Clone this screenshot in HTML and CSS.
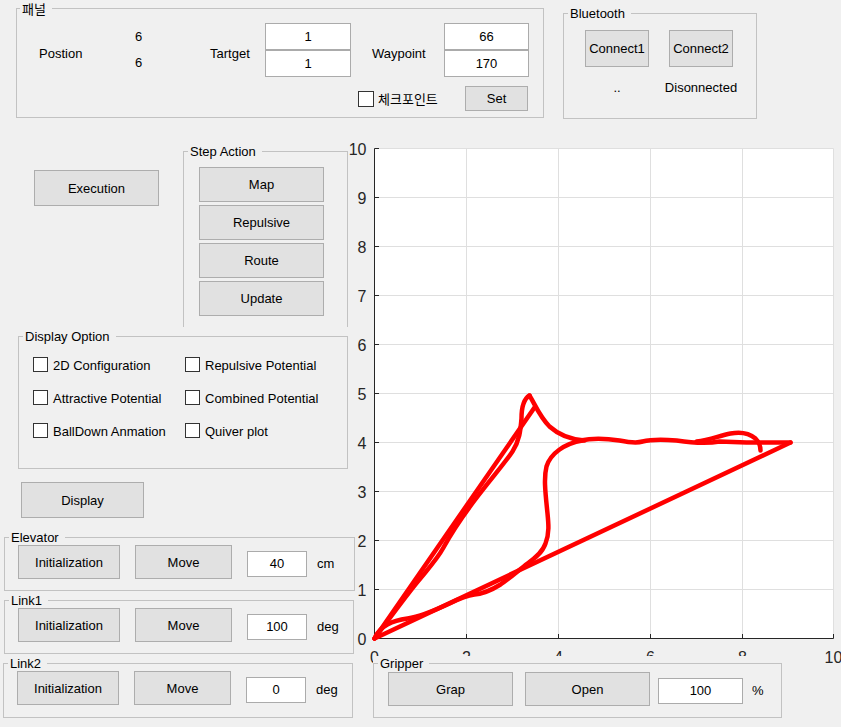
FILE: index.html
```html
<!DOCTYPE html>
<html lang="ko">
<head>
<meta charset="utf-8">
<title>Robot GUI</title>
<link rel="stylesheet" href="styles.css">
</head>
<body>
<div class="app">
  <div class="top">
    <div class="panel p-main">
      <span class="legend">패널</span>
      <div class="main-grid">
        <span class="lbl l-pos">Postion</span>
        <div class="vals"><span>6</span><span>6</span></div>
        <span class="lbl l-tar">Tartget</span>
        <div class="fields"><div class="field f-tar">1</div><div class="field f-tar">1</div></div>
        <span class="lbl l-way">Waypoint</span>
        <div class="fields"><div class="field f-way">66</div><div class="field f-way">170</div></div>
        <label class="chk chk-kr"><span class="box"></span><span>체크포인트</span></label>
        <button class="btn b-set">Set</button>
      </div>
    </div>
    <div class="panel p-bt">
      <span class="legend">Bluetooth</span>
      <div class="bt-grid">
        <button class="btn b-conn">Connect1</button>
        <button class="btn b-conn">Connect2</button>
        <span class="bt-status">..</span>
        <span class="bt-status">Disonnected</span>
      </div>
    </div>
  </div>

  <div class="main">
    <div class="left">
      <div class="row-exec">
        <button class="btn b-exec">Execution</button>
        <div class="panel p-step">
          <span class="legend">Step Action</span>
          <div class="step-list">
            <button class="btn b-step">Map</button>
            <button class="btn b-step">Repulsive</button>
            <button class="btn b-step">Route</button>
            <button class="btn b-step">Update</button>
          </div>
        </div>
      </div>

      <div class="panel p-disp">
        <span class="legend">Display Option</span>
        <div class="opt-grid">
          <label class="chk"><span class="box"></span><span>2D Configuration</span></label>
          <label class="chk"><span class="box"></span><span>Repulsive Potential</span></label>
          <label class="chk"><span class="box"></span><span>Attractive Potential</span></label>
          <label class="chk"><span class="box"></span><span>Combined Potential</span></label>
          <label class="chk"><span class="box"></span><span>BallDown Anmation</span></label>
          <label class="chk"><span class="box"></span><span>Quiver plot</span></label>
        </div>
      </div>

      <button class="btn b-display">Display</button>

      <div class="panel p-joint p-elev">
        <span class="legend">Elevator</span>
        <div class="joint-row">
          <button class="btn b-init">Initialization</button>
          <button class="btn b-move">Move</button>
          <div class="field f-joint">40</div>
          <span class="unit">cm</span>
        </div>
      </div>
      <div class="panel p-joint p-link1">
        <span class="legend">Link1</span>
        <div class="joint-row">
          <button class="btn b-init">Initialization</button>
          <button class="btn b-move">Move</button>
          <div class="field f-joint">100</div>
          <span class="unit">deg</span>
        </div>
      </div>
      <div class="panel p-joint p-link2">
        <span class="legend">Link2</span>
        <div class="joint-row">
          <button class="btn b-init">Initialization</button>
          <button class="btn b-move">Move</button>
          <div class="field f-joint">0</div>
          <span class="unit">deg</span>
        </div>
      </div>
    </div>

    <div class="right">
      <svg class="chart" width="496" height="532" viewBox="0 0 496 532" xmlns="http://www.w3.org/2000/svg">
        <g transform="translate(29.5,8.5)">
          <rect x="0" y="0" width="459" height="490" fill="#ffffff"/>
          <g stroke="#dfdfdf" stroke-width="1">
            <line x1="92" y1="0" x2="92" y2="490"/>
            <line x1="184" y1="0" x2="184" y2="490"/>
            <line x1="276" y1="0" x2="276" y2="490"/>
            <line x1="368" y1="0" x2="368" y2="490"/>
            <line x1="459" y1="0" x2="459" y2="490"/>
            <line x1="0" y1="0" x2="459" y2="0"/>
            <line x1="0" y1="49" x2="459" y2="49"/>
            <line x1="0" y1="98" x2="459" y2="98"/>
            <line x1="0" y1="147" x2="459" y2="147"/>
            <line x1="0" y1="196" x2="459" y2="196"/>
            <line x1="0" y1="245" x2="459" y2="245"/>
            <line x1="0" y1="294" x2="459" y2="294"/>
            <line x1="0" y1="343" x2="459" y2="343"/>
            <line x1="0" y1="392" x2="459" y2="392"/>
            <line x1="0" y1="441" x2="459" y2="441"/>
          </g>
          <g stroke="#262626" stroke-width="1">
            <line x1="0" y1="0" x2="0" y2="490"/>
            <line x1="0" y1="490" x2="459" y2="490"/>
            <line x1="0" y1="0" x2="4.5" y2="0"/>
            <line x1="0" y1="49" x2="4.5" y2="49"/>
            <line x1="0" y1="98" x2="4.5" y2="98"/>
            <line x1="0" y1="147" x2="4.5" y2="147"/>
            <line x1="0" y1="196" x2="4.5" y2="196"/>
            <line x1="0" y1="245" x2="4.5" y2="245"/>
            <line x1="0" y1="294" x2="4.5" y2="294"/>
            <line x1="0" y1="343" x2="4.5" y2="343"/>
            <line x1="0" y1="392" x2="4.5" y2="392"/>
            <line x1="0" y1="441" x2="4.5" y2="441"/>
            <line x1="92" y1="490" x2="92" y2="485.5"/>
            <line x1="184" y1="490" x2="184" y2="485.5"/>
            <line x1="276" y1="490" x2="276" y2="485.5"/>
            <line x1="368" y1="490" x2="368" y2="485.5"/>
            <line x1="459" y1="490" x2="459" y2="485.5"/>
          </g>
          <g class="tick" text-anchor="end">
            <text x="-8" y="6.5">10</text>
            <text x="-8" y="55.5">9</text>
            <text x="-8" y="104.5">8</text>
            <text x="-8" y="153.5">7</text>
            <text x="-8" y="202.5">6</text>
            <text x="-8" y="251.5">5</text>
            <text x="-8" y="300.5">4</text>
            <text x="-8" y="349.5">3</text>
            <text x="-8" y="398.5">2</text>
            <text x="-8" y="447.5">1</text>
            <text x="-8" y="496.5">0</text>
          </g>
          <g class="tick" text-anchor="middle">
            <text x="0" y="514">0</text>
            <text x="92" y="514">2</text>
            <text x="184" y="514">4</text>
            <text x="276" y="514">6</text>
            <text x="368" y="514">8</text>
            <text x="459" y="514">10</text>
          </g>
          <g fill="none" stroke="#ff0000" stroke-width="4.5" stroke-linecap="round" stroke-linejoin="round">
            <path d="M0,490 L416,294"/>
            <path d="M0,490 L160,259"/>
            <path d="M1,488 C6,478 18,472 33,470 C46,468 60,462 75,455 C85,450 92,447 100,446 C110,445 118,441 126,436 C135,430 145,421 153,415 C160,410 168,404 171,395 C175,385 174,375 173,365 C171,345 169,330 172,318 C176,305 190,295 208,292"/>
            <path d="M206,292 C220,289 232,290 245,292 C255,294 262,295 268,293 C276,291 290,291 302,292 C315,294 330,296 345,293 L372,294 L416,294"/>
            <path d="M322,293 C335,292 345,287 356,285 C366,283 375,285 381,290 C385,294 386,298 386,302"/>
            <path d="M0,490 C12,474 25,456 40,437 C52,422 62,412 69,399 C75,388 85,372 100,352 C115,332 130,315 138,303 C145,292 146,282 147,270 C147,258 150,250 155,247"/>
            <path d="M155,247 C160,255 165,268 175,278 C185,287 195,291 210,292"/>
          </g>
        </g>
      </svg>
      <div class="grip-wrap">
        <div class="panel p-grip">
          <span class="legend">Gripper</span>
          <div class="grip-row">
            <button class="btn b-grip">Grap</button>
            <button class="btn b-grip b-open">Open</button>
            <div class="field f-grip">100</div>
            <span class="unit">%</span>
          </div>
        </div>
      </div>
    </div>
  </div>
</div>
</body>
</html>
```

FILE: styles.css
```css
* { box-sizing: border-box; }

html, body {
  margin: 0;
  padding: 0;
  background: #f0f0f0;
}

body {
  font-family: "Liberation Sans", Arial, "Noto Sans CJK KR", sans-serif;
  font-size: 13px;
  line-height: 15px;
  color: #000;
}

.app {
  width: 841px;
  height: 727px;
  overflow: hidden;
  background: #f0f0f0;
}

/* generic controls */
.panel {
  position: relative;
  border: 1px solid #c2c2c2;
}

.legend {
  position: absolute;
  top: -8px;
  left: 4px;
  padding: 0 6px 0 2px;
  background: #f0f0f0;
  line-height: 15px;
  white-space: nowrap;
}

.btn {
  display: flex;
  align-items: center;
  justify-content: center;
  margin: 0;
  padding: 0;
  font: inherit;
  color: #000;
  background: #e1e1e1;
  border: 1px solid #adadad;
  border-radius: 0;
}

.field {
  display: flex;
  align-items: center;
  justify-content: center;
  background: #fff;
  border: 1px solid #ababab;
}

.chk {
  display: flex;
  align-items: center;
  gap: 5px;
  white-space: nowrap;
}

.box {
  width: 15px;
  height: 15px;
  background: #fff;
  border: 1px solid #333;
  flex: none;
}

/* top row */
.top {
  display: flex;
  align-items: flex-start;
  height: 119px;
}

.p-main {
  margin: 8px 0 0 16px;
  width: 528px;
  height: 110px;
}

.p-main .legend {
  font-family: "Noto Sans CJK KR", sans-serif;
  font-size: 13px;
  top: -9px;
  left: 3px;
  line-height: 17px;
}

.main-grid {
  display: grid;
  grid-template-columns: 111px 21px 116px 86px 93px 85px;
  grid-template-rows: 54px 25px;
  row-gap: 9px;
  padding-top: 14px;
}

.lbl {
  align-self: start;
  margin-top: 23px;
  white-space: nowrap;
}

.l-pos { padding-left: 22px; }
.l-tar { padding-left: 61px; }
.l-way { padding-left: 21px; }

.vals {
  display: flex;
  flex-direction: column;
  align-items: center;
  padding-top: 1px;
  line-height: 26px;
}

.fields {
  display: flex;
  flex-direction: column;
}

.f-tar, .f-way { height: 27px; }

.chk-kr {
  grid-column: 5;
  grid-row: 2;
  padding-left: 7px;
  gap: 4px;
  font-family: "Noto Sans CJK KR", sans-serif;
  font-size: 13px;
}

.chk-kr .box { width: 16px; height: 16px; }

.b-set {
  grid-column: 6;
  grid-row: 2;
  margin-left: 21px;
  width: 63px;
  height: 25px;
}

.p-bt {
  margin: 13px 0 0 19px;
  width: 194px;
  height: 106px;
}

.bt-grid {
  display: grid;
  grid-template-columns: 64px 64px;
  grid-template-rows: 37px 15px;
  column-gap: 20px;
  row-gap: 13px;
  padding: 16px 0 0 21px;
}

.b-conn { height: 37px; }

.bt-status {
  display: flex;
  justify-content: center;
  white-space: nowrap;
}

/* main area */
.main {
  display: flex;
  align-items: flex-start;
}

.left {
  width: 355px;
  flex: none;
  display: flex;
  flex-direction: column;
  align-items: flex-start;
}

.row-exec {
  display: flex;
  align-items: flex-start;
}

.b-exec {
  margin: 51px 0 0 34px;
  width: 125px;
  height: 36px;
}

.p-step {
  margin: 32px 0 0 24px;
  width: 165px;
  height: 176px;
  border-bottom: none;
}

.step-list {
  display: flex;
  flex-direction: column;
  gap: 3px;
  padding: 15px 0 0 15px;
}

.b-step {
  width: 125px;
  height: 35px;
}

.p-disp {
  margin: 9px 0 0 18px;
  width: 330px;
  height: 133px;
}

.opt-grid {
  display: grid;
  grid-template-columns: 152px 150px;
  grid-auto-rows: 33px;
  padding: 20px 0 0 14px;
}

.opt-grid .chk { align-items: flex-start; }
.opt-grid .chk span:last-child { margin-top: 1px; }

.b-display {
  margin: 13px 0 0 21px;
  width: 123px;
  height: 36px;
}

.p-joint {
  width: 351px;
  height: 54px;
}

.p-elev { margin: 19px 0 0 4px; }
.p-link1 { margin: 9px 0 0 4px; width: 350px; }
.p-link2 { margin: 9px 0 0 3px; width: 350px; height: 55px; }

.joint-row {
  display: flex;
  align-items: center;
  padding: 7px 0 0 13px;
}

.b-init {
  width: 102px;
  height: 34px;
}

.b-move {
  margin-left: 15px;
  width: 97px;
  height: 34px;
}

.f-joint {
  margin: 3px 0 0 15px;
  width: 60px;
  height: 26px;
}

.unit {
  margin: 3px 0 0 10px;
}

/* chart */
.right {
  margin-left: -10px;
  display: flex;
  flex-direction: column;
  align-items: flex-start;
}

.chart {
  display: block;
  margin-top: 21px;
}

.tick {
  font-family: "Liberation Sans", Arial, sans-serif;
  font-size: 16px;
  fill: #262626;
}

.grip-wrap {
  margin: -16px 0 0 28px;
  width: 409px;
  padding-top: 7px;
  background: #f0f0f0;
}

.p-grip {
  width: 409px;
  height: 55px;
}

.grip-row {
  display: flex;
  align-items: center;
  padding: 8px 0 0 14px;
}

.b-grip {
  width: 125px;
  height: 34px;
}

.b-open { margin-left: 12px; }

.f-grip {
  margin: 3px 0 0 8px;
  width: 85px;
  height: 26px;
}

.grip-row .unit { margin-left: 9px; }
```
